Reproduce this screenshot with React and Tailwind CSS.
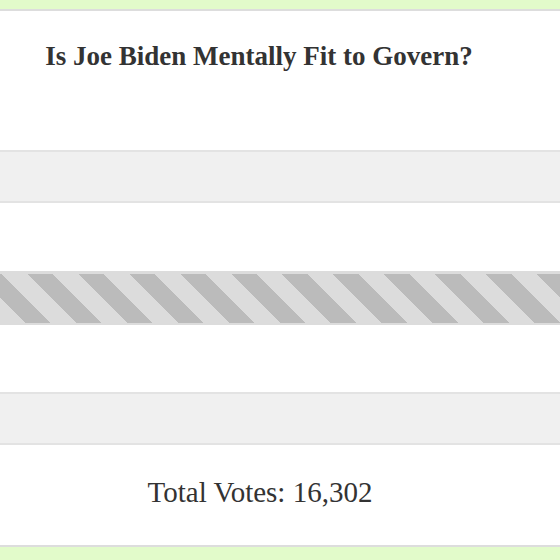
import React from 'react';

const serif = { fontFamily: '"Liberation Serif", "Times New Roman", serif' };

const PollBar = ({ striped }) =>
  striped ? (
    <div className="h-[54px] border-t-[3px] border-b-[2px] border-[#dcdcdc] bg-[repeating-linear-gradient(45deg,#dcdcdc_0px,#dcdcdc_18px,#bbbbbb_18px,#bbbbbb_36px)]" />
  ) : (
    <div className="h-[53px] border-y-2 border-[#e3e3e3] bg-[#f0f0f0]" />
  );

const App = () => {
  return (
    <div className="w-[560px] h-[560px] bg-[#e2fbca] pt-[9px] overflow-hidden" style={serif}>
      <div className="bg-white border-t-2 border-b-2 border-[#dddddd] text-[#333333]">
        {/* Question */}
        <div className="h-[139px] pt-[29px] pr-[42px] text-center">
          <h1 className="text-[27px] leading-[32px] font-bold">Is Joe Biden Mentally Fit to Govern?</h1>
        </div>

        {/* Answers */}
        <PollBar />
        <div className="h-[68px]" />
        <PollBar striped />
        <div className="h-[67px]" />
        <PollBar />

        {/* Total */}
        <div className="h-[100px] pt-[31px] pr-[40px] text-center">
          <p className="text-[29px] leading-[32px]">Total Votes: 16,302</p>
        </div>
      </div>
    </div>
  );
};

export default App;
